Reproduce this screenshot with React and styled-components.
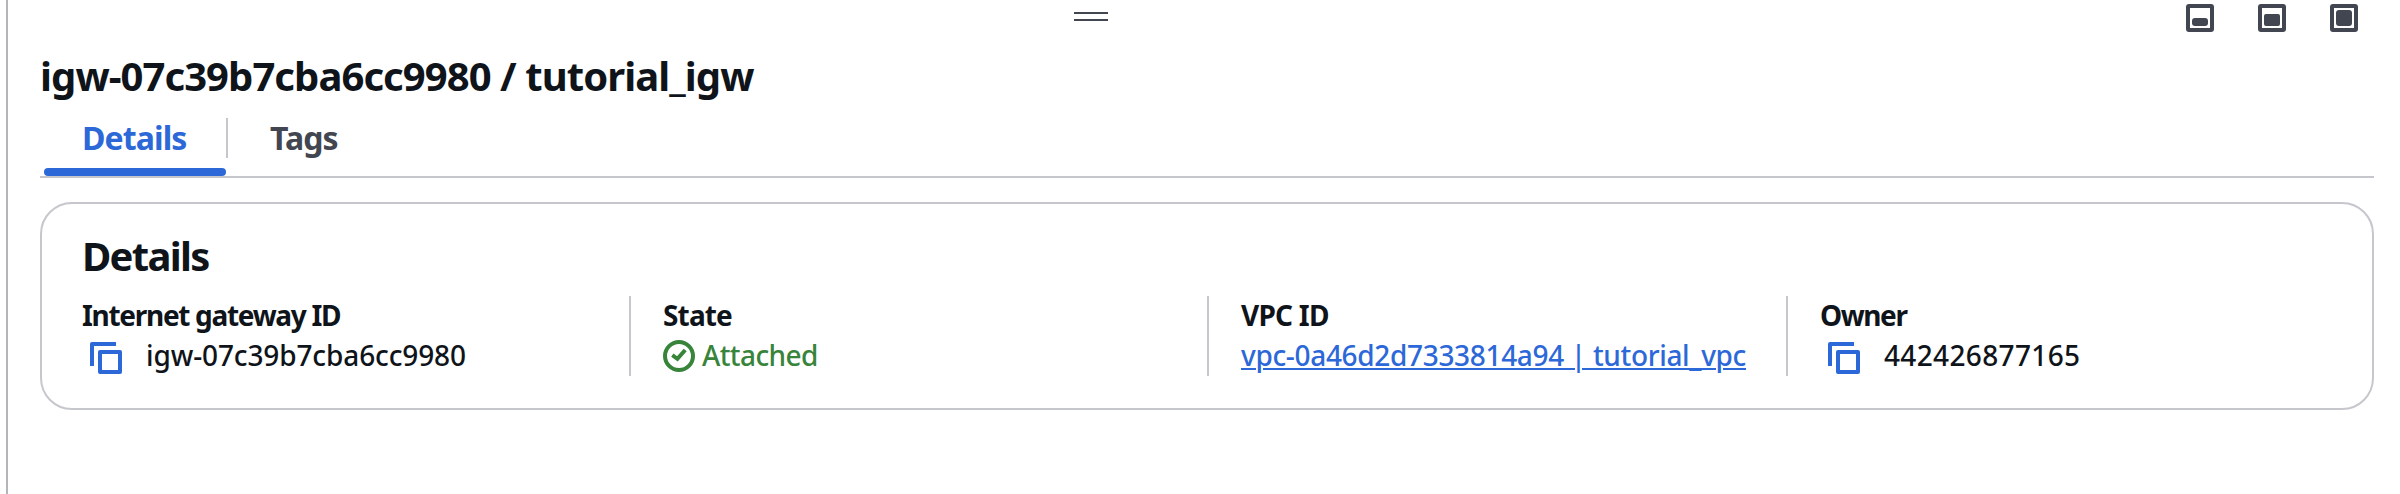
import React from "react";
import styled, { createGlobalStyle } from "styled-components";

const color = {
  text: "#0f141a",
  muted: "#424650",
  accent: "#2c68d8",
  success: "#37843a",
  line: "#c6c6cd",
  edge: "#b4b4bb",
};

const GlobalStyle = createGlobalStyle`
  *, *::before, *::after { box-sizing: border-box; }
  body {
    margin: 0;
    background: #fff;
    color: ${color.text};
    font-family: "Noto Sans", "Open Sans", sans-serif;
  }
`;

const Panel = styled.section`
  height: 494px;
  margin-left: 6px;
  padding: 0 26px 0 32px;
  border-left: 2px solid ${color.edge};
  background: #fff;
  overflow: hidden;
`;

const Toolbar = styled.div`
  display: grid;
  grid-template-columns: 1034px 34px 1fr;
  align-items: start;
  height: 52px;
`;

const Handle = styled.div`
  grid-column: 2;
  height: 9px;
  margin-top: 12px;
  border: solid ${color.muted};
  border-width: 2px 0;
`;

const SizeButtons = styled.div`
  display: flex;
  justify-content: flex-end;
  gap: 44px;
  padding: 4px 16px 0 0;
`;

const SizeButton = styled.button`
  display: flex;
  align-items: flex-end;
  width: 28px;
  height: 28px;
  padding: 2px;
  border: 4px solid ${color.muted};
  border-radius: 3px;
  background: none;

  &::after {
    content: "";
    width: 16px;
    height: ${(p) => p.$fill}px;
    border-radius: ${(p) => (p.$fill === 12 ? 2 : 3)}px;
    background: ${color.muted};
  }
`;

const Title = styled.h1`
  margin: 0;
  font-size: 40px;
  line-height: 48px;
  font-weight: 700;
  letter-spacing: -0.93px;
  white-space: nowrap;
`;

const Tabs = styled.nav`
  display: flex;
  height: 78px;
  padding: 18px 0 0 4px;
  border-bottom: 2px solid ${color.line};
`;

const Tab = styled.button`
  display: flex;
  flex-direction: column;
  justify-content: space-between;
  width: 182px;
  height: 58px;
  padding: 0;
  border: 0;
  background: none;
  font: 700 32px/40px "Noto Sans", "Open Sans", sans-serif;
  letter-spacing: -0.9px;
  text-align: left;
  color: ${(p) => (p.$active ? color.accent : color.muted)};

  span { padding-left: ${(p) => (p.$active ? 38 : 42)}px; }

  &::after {
    content: "";
    width: 100%;
    height: 8px;
    border-radius: 4px;
    background: ${(p) => (p.$active ? color.accent : "transparent")};
  }
`;

const TabDivider = styled.div`
  width: 2px;
  height: 40px;
  background: ${color.line};
`;

const Card = styled.article`
  height: 208px;
  margin-top: 24px;
  padding: 28px 40px 0;
  border: 2px solid ${color.line};
  border-radius: 32px;
`;

const CardTitle = styled.h2`
  margin: 0 0 16px;
  font-size: 40px;
  line-height: 48px;
  font-weight: 700;
  letter-spacing: -1.7px;
`;

const Fields = styled.dl`
  display: grid;
  grid-template-columns: 547px 578px 579px 1fr;
  height: 80px;
  margin: 0;
`;

const Field = styled.div`
  font-size: 28px;
  line-height: 39px;
  font-weight: 500;
  white-space: nowrap;

  & + & {
    padding-left: 32px;
    border-left: 2px solid ${color.line};
  }
`;

const Label = styled.dt`
  height: 40px;
  font-weight: 700;
  letter-spacing: ${(p) => p.$tracking}px;
`;

const Value = styled.dd`
  display: flex;
  height: 40px;
  margin: 0;
  letter-spacing: ${(p) => p.$tracking || 0}px;
`;

const Status = styled.span`
  display: flex;
  gap: 7px;
  color: ${color.success};
`;

const Link = styled.a`
  color: ${color.accent};
  text-decoration: underline;
  text-decoration-thickness: 2px;
  text-underline-offset: 2px;
`;

const CopyButton = styled.button`
  display: block;
  width: 64px;
  height: 40px;
  padding: 4px 0 0 8px;
  border: 0;
  background: none;
  color: ${color.accent};
`;

const Icon = styled.svg`
  display: block;
  flex: none;
  width: 32px;
  height: 32px;
  margin-top: ${(p) => p.$top || 0}px;
  fill: none;
  stroke: currentColor;
  stroke-width: 4;
`;

function Copy({ label }) {
  return (
    <CopyButton aria-label={label}>
      <Icon viewBox="0 0 32 32" strokeLinejoin="round">
        <path d="M2 24V2H26" />
        <path d="M10 10H30V30H10Z" />
      </Icon>
    </CopyButton>
  );
}

export default function App() {
  return (
    <>
      <GlobalStyle />
      <Panel>
        <Toolbar>
          <Handle />
          <SizeButtons>
            <SizeButton $fill={8} aria-label="Small panel" />
            <SizeButton $fill={12} aria-label="Medium panel" />
            <SizeButton $fill={16} aria-label="Full panel" />
          </SizeButtons>
        </Toolbar>
        <Title>igw-07c39b7cba6cc9980 / tutorial_igw</Title>
        <Tabs>
          <Tab $active><span>Details</span></Tab>
          <TabDivider />
          <Tab><span>Tags</span></Tab>
        </Tabs>
        <Card>
          <CardTitle>Details</CardTitle>
          <Fields>
            <Field>
              <Label $tracking={-1.3}>Internet gateway ID</Label>
              <Value $tracking={-0.12}>
                <Copy label="Copy gateway ID" />
                igw-07c39b7cba6cc9980
              </Value>
            </Field>
            <Field>
              <Label $tracking={-0.85}>State</Label>
              <Value $tracking={-0.6}>
                <Status>
                  <Icon viewBox="0 0 32 32" $top={4}>
                    <circle cx="16" cy="16" r="14" />
                    <path d="M9.3 15.2L14.4 18.8L22.2 10" />
                  </Icon>
                  Attached
                </Status>
              </Value>
            </Field>
            <Field>
              <Label $tracking={-0.75}>VPC ID</Label>
              <Value $tracking={-0.33}>
                <Link>vpc-0a46d2d7333814a94 | tutorial_vpc</Link>
              </Value>
            </Field>
            <Field>
              <Label $tracking={-1.4}>Owner</Label>
              <Value $tracking={0.35}>
                <Copy label="Copy owner" />
                442426877165
              </Value>
            </Field>
          </Fields>
        </Card>
      </Panel>
    </>
  );
}
